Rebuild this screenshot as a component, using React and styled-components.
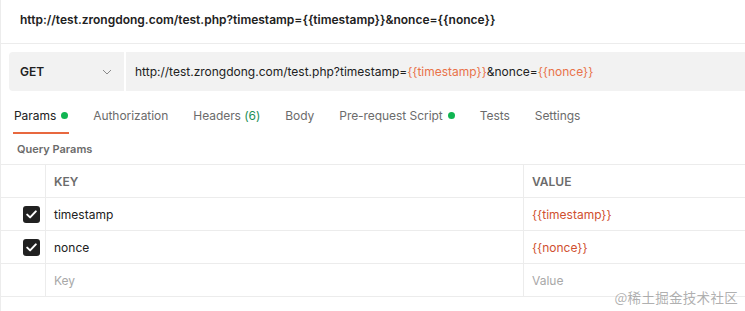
import React from "react";
import styled, { createGlobalStyle } from "styled-components";

const Global = createGlobalStyle`
  html, body { margin: 0; padding: 0; background: #ffffff; }
  body { font-family: Inter, "Noto Sans", "Noto Sans CJK SC", sans-serif; color: #212121; }
  * { box-sizing: border-box; }
`;

const Page = styled.div`
  width: 745px;
  height: 311px;
  overflow: hidden;
  position: relative;
  border-left: 1px solid #ececec;
`;

const TitleBar = styled.div`
  height: 44px;
  display: flex;
  align-items: center;
  padding: 0 0 5px 19px;
  border-bottom: 1px solid #ececec;
  font-size: 12px;
  font-weight: 600;
  color: #212121;
  white-space: nowrap;
`;

const UrlRow = styled.div`
  display: flex;
  gap: 2px;
  height: 39px;
  margin: 8px 0 0 8px;
`;

const Method = styled.div`
  width: 115px;
  flex: none;
  display: flex;
  align-items: center;
  justify-content: space-between;
  padding: 0 12px 0 11px;
  background: #f2f2f2;
  border-radius: 4px 0 0 4px;
  font-size: 12px;
  font-weight: 600;
  color: #212121;
`;

const UrlField = styled.div`
  flex: 1;
  display: flex;
  align-items: center;
  padding-left: 9px;
  background: #f2f2f2;
  font-size: 12px;
  color: #212121;
  white-space: nowrap;
`;

const Var = styled.span`
  color: ${(p) => p.$c || "#e9724a"};
`;

const Tabs = styled.div`
  display: flex;
  align-items: flex-end;
  height: 43px;
  padding-left: 12px;
  gap: 23px;
`;

const Tab = styled.div`
  display: flex;
  align-items: center;
  gap: 5px;
  height: 33px;
  padding: 0 1px 2px 1px;
  font-size: 12px;
  letter-spacing: -0.05px;
  color: ${(p) => (p.$active ? "#212121" : "#6b6b6b")};
  border-bottom: 2px solid ${(p) => (p.$active ? "#e8683f" : "transparent")};
  white-space: nowrap;
`;

const Dot = styled.span`
  width: 7px;
  height: 7px;
  border-radius: 50%;
  background: #10b552;
  display: inline-block;
`;

const Count = styled.span`
  color: #1a8f57;
`;

const SectionLabel = styled.div`
  height: 30px;
  display: flex;
  align-items: center;
  padding-left: 16px;
  font-size: 11px;
  font-weight: 600;
  color: #6b6b6b;
`;

const Table = styled.div`
  display: grid;
  grid-template-columns: 44px 478px 1fr;
  border-top: 1px solid #ececec;
`;

const Cell = styled.div`
  height: 33px;
  display: flex;
  align-items: center;
  padding-left: ${(p) => (p.$check ? "22px" : "8px")};
  border-bottom: 1px solid #ececec;
  border-left: ${(p) => (p.$first ? "none" : "1px solid #ececec")};
  font-size: 12px;
  font-weight: ${(p) => (p.$head ? 600 : 400)};
  color: ${(p) => p.$color || "#212121"};
  white-space: nowrap;
`;

const Check = styled.span`
  width: 17px;
  height: 17px;
  border-radius: 3px;
  background: #212121;
  display: flex;
  align-items: center;
  justify-content: center;
`;

const Watermark = styled.div`
  position: absolute;
  right: 7px;
  bottom: 4px;
  font-family: "Noto Sans CJK SC", sans-serif;
  font-size: 13.5px;
  color: rgba(150, 150, 150, 0.75);
  letter-spacing: 0.3px;
`;

const Chevron = () => (
  <svg width="10" height="6" viewBox="0 0 10 6" fill="none">
    <path d="M1 1l4 4 4-4" stroke="#8a8a8a" strokeWidth="1" />
  </svg>
);

const Tick = () => (
  <svg width="11" height="9" viewBox="0 0 11 9" fill="none">
    <path d="M1.2 4.6l2.9 2.8L9.8 1.4" stroke="#ffffff" strokeWidth="2" strokeLinecap="round" strokeLinejoin="round" />
  </svg>
);

const rows = [
  { key: "timestamp", value: "{{timestamp}}", checked: true },
  { key: "nonce", value: "{{nonce}}", checked: true },
];

export default function App() {
  return (
    <>
      <Global />
      <Page>
        <TitleBar>http://test.zrongdong.com/test.php?timestamp={"{{timestamp}}"}&amp;nonce={"{{nonce}}"}</TitleBar>
        <UrlRow>
          <Method>
            GET
            <Chevron />
          </Method>
          <UrlField>
            http://test.zrongdong.com/test.php?timestamp=<Var>{"{{timestamp}}"}</Var>&amp;nonce=<Var>{"{{nonce}}"}</Var>
          </UrlField>
        </UrlRow>
        <Tabs>
          <Tab $active>
            Params <Dot />
          </Tab>
          <Tab>Authorization</Tab>
          <Tab>
            <span>
              Headers <Count>(6)</Count>
            </span>
          </Tab>
          <Tab>Body</Tab>
          <Tab>
            Pre-request Script <Dot />
          </Tab>
          <Tab>Tests</Tab>
          <Tab>Settings</Tab>
        </Tabs>
        <SectionLabel>Query Params</SectionLabel>
        <Table>
          <Cell $first />
          <Cell $head $color="#6b6b6b">KEY</Cell>
          <Cell $head $color="#6b6b6b">VALUE</Cell>
          {rows.map((r) => (
            <React.Fragment key={r.key}>
              <Cell $first $check>
                <Check>
                  <Tick />
                </Check>
              </Cell>
              <Cell>{r.key}</Cell>
              <Cell $color="#d0502f">{r.value}</Cell>
            </React.Fragment>
          ))}
          <Cell $first />
          <Cell $color="#a8a8a8">Key</Cell>
          <Cell $color="#a8a8a8">Value</Cell>
        </Table>
        <Watermark>@稀土掘金技术社区</Watermark>
      </Page>
    </>
  );
}
